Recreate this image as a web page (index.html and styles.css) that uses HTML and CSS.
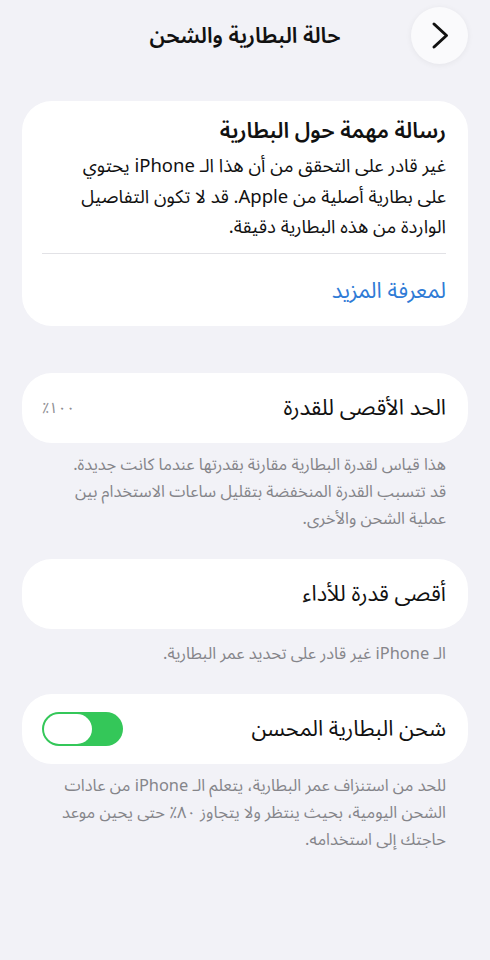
FILE: index.html
```html
<!DOCTYPE html>
<html lang="ar" dir="rtl">
<head>
<meta charset="utf-8">
<title>حالة البطارية والشحن</title>
<link rel="stylesheet" href="styles.css">
</head>
<body>
<div class="screen">
  <header class="topbar">
    <button class="back" aria-label="رجوع">
      <svg width="57" height="57" viewBox="0 0 57 57"><path d="M23 17 L35.5 28.5 L23 40" fill="none" stroke="#111" stroke-width="3" stroke-linecap="round" stroke-linejoin="round"/></svg>
    </button>
    <h1 class="title">حالة البطارية والشحن</h1>
  </header>

  <section class="card notice">
    <h2 class="notice-title">رسالة مهمة حول البطارية</h2>
    <p class="notice-body">غير قادر على التحقق من أن هذا الـ iPhone يحتوي<br>على بطارية أصلية من Apple. قد لا تكون التفاصيل<br>الواردة من هذه البطارية دقيقة.</p>
    <div class="sep"></div>
    <a class="link" href="#">لمعرفة المزيد</a>
  </section>

  <section class="card row">
    <span class="row-label">الحد الأقصى للقدرة</span>
    <span class="row-value">١٠٠٪</span>
  </section>
  <p class="footnote">هذا قياس لقدرة البطارية مقارنة بقدرتها عندما كانت جديدة.<br>قد تتسبب القدرة المنخفضة بتقليل ساعات الاستخدام بين<br>عملية الشحن والأخرى.</p>

  <section class="card row">
    <span class="row-label">أقصى قدرة للأداء</span>
  </section>
  <p class="footnote single">الـ iPhone غير قادر على تحديد عمر البطارية.</p>

  <section class="card row">
    <span class="row-label">شحن البطارية المحسن</span>
    <span class="toggle"><span class="knob"></span></span>
  </section>
  <p class="footnote">للحد من استنزاف عمر البطارية، يتعلم الـ iPhone من عادات<br>الشحن اليومية، بحيث ينتظر ولا يتجاوز ٨٠٪ حتى يحين موعد<br>حاجتك إلى استخدامه.</p>
</div>
</body>
</html>
```

FILE: styles.css
```css
html, body {
  margin: 0;
  padding: 0;
}
body {
  background: #f2f2f7;
  font-family: "Noto Sans Arabic", "DejaVu Sans", "Noto Sans", sans-serif;
  color: #111;
}
.screen {
  width: 490px;
  min-height: 960px;
  box-sizing: border-box;
  padding: 7px 22px 0;
}
.topbar {
  position: relative;
  height: 57px;
  display: flex;
  align-items: center;
  justify-content: center;
  margin-bottom: 37px;
}
.back {
  position: absolute;
  right: 0;
  top: 0;
  width: 57px;
  height: 57px;
  border-radius: 50%;
  border: none;
  padding: 0;
  background: #fafafc;
  box-shadow: 0 1px 6px rgba(0,0,0,0.06);
  display: flex;
  align-items: center;
  justify-content: center;
}
.title {
  margin: 0;
  font-size: 21.6px;
  font-weight: 600;
  line-height: 24px;
}
.card {
  background: #fff;
  border-radius: 30px;
}
.notice {
  padding: 17px 22px 20px 20px;
  display: flex;
  flex-direction: column;
  margin-bottom: 47px;
}
.notice-title {
  margin: 0 0 8px;
  font-size: 21.7px;
  font-weight: 600;
  line-height: 26px;
}
.notice-body {
  margin: 0;
  font-size: 18.5px;
  line-height: 30.5px;
}
.sep {
  height: 1px;
  background: #e2e2e6;
  margin: 9px 0 0;
}
.link {
  color: #2f7bd6;
  text-decoration: none;
  font-size: 22px;
  line-height: 30px;
  margin-top: 22px;
}
.row {
  height: 70px;
  box-sizing: border-box;
  padding: 0 22px 0 20px;
  display: flex;
  align-items: center;
  justify-content: space-between;
}
.row-label {
  font-size: 21.8px;
  line-height: 26px;
}
.row-value {
  font-size: 15px;
  color: #8e8e93;
}
.footnote {
  margin: 0 0 27px;
  padding: 8px 22px 0 10px;
  font-size: 16.4px;
  line-height: 27px;
  color: #85858a;
}
.footnote.single {
  padding-top: 11px;
}
.toggle {
  width: 81px;
  height: 34px;
  border-radius: 17px;
  background: #34c759;
  display: flex;
  align-items: center;
  justify-content: flex-end;
  padding: 0 2px;
  box-sizing: border-box;
}
.knob {
  width: 48px;
  height: 30px;
  border-radius: 15px;
  background: #fff;
}
```
